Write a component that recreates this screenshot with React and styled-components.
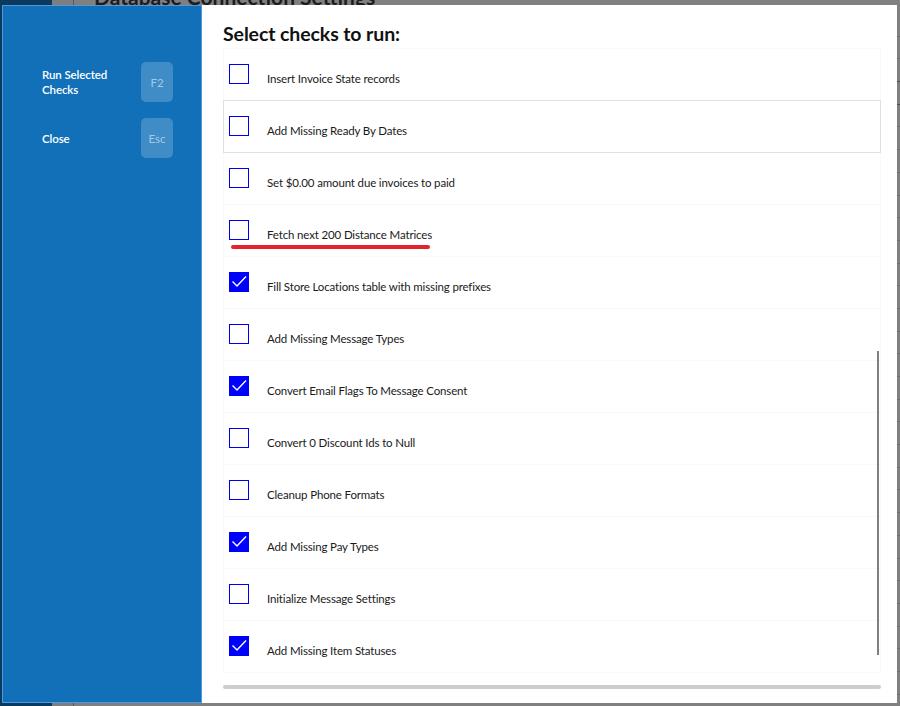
import React from "react";
import styled, { createGlobalStyle } from "styled-components";

const GlobalStyle = createGlobalStyle`
    html, body {
        margin: 0;
        padding: 0;
        background: #808080;
        overflow: hidden;
    }
    * {
        box-sizing: border-box;
    }
`;

const Page = styled.div`
    position: relative;
    width: 900px;
    height: 706px;
    overflow: hidden;
    display: flex;
    font-family: Lato, "Open Sans", sans-serif;
`;

const BgNav = styled.div`
    width: 52px;
    background: #0b3a5f;
`;

const BgGutter = styled.div`
    width: 22px;
    border-right: 1px solid #5a5a5a;
    background: #7e7e7e;
`;

const BgMain = styled.div`
    flex: 1;
    background: #808080;
    padding-left: 20px;
`;

// heading of the page under the dialog, only its lower edge peeks out
const BgHeading = styled.h1`
    margin: -15px 0 0;
    font-size: 21px;
    font-weight: 700;
    line-height: 24px;
    color: #1c1c1c;
`;

const BgLines = styled.div`
    margin-top: 5px;
    display: flex;
    flex-direction: column;
`;

const BgLine = styled.div`
    height: 22.7px;
    border-bottom: 1px solid ${({ $dark }) => ($dark ? "#4e4e4e" : "#6c6c6c")};
`;

const Modal = styled.div`
    position: absolute;
    top: 5px;
    left: 2px;
    width: 895px;
    height: 698px;
    display: flex;
    background: #fff;
`;

const Sidebar = styled.aside`
    width: 200px;
    background: #1170b8;
    border: 1px solid #4f97e0;
    padding: 56px 0 0 39px;
    display: flex;
    flex-direction: column;
    gap: 16px;
`;

const Action = styled.div`
    display: flex;
    align-items: center;
`;

const ActionLabel = styled.div`
    width: 99px;
    color: #fff;
    font-size: 11.5px;
    font-weight: 600;
    line-height: 15px;
    letter-spacing: -0.1px;
`;

const KeyCap = styled.div`
    width: 32px;
    height: 40px;
    border-radius: 5px;
    background: rgba(255, 255, 255, 0.2);
    color: rgba(255, 255, 255, 0.55);
    font-size: 11.5px;
    display: flex;
    align-items: center;
    justify-content: center;
`;

const Content = styled.section`
    position: relative;
    flex: 1;
    padding: 17px 16px 0 21px;
    display: flex;
    flex-direction: column;
`;

const Title = styled.h2`
    margin: 0 0 2px;
    font-size: 19.5px;
    font-weight: 700;
    line-height: 24px;
    letter-spacing: -0.1px;
    color: #111;
`;

const List = styled.div`
    display: flex;
    flex-direction: column;
`;

const Row = styled.div`
    position: relative;
    height: 53px;
    margin-top: -1px;
    border: 1px solid ${({ $hover }) => ($hover ? "#e0e0e0" : "#f9f9f9")};
    padding-left: 5px;
    display: flex;
    align-items: flex-start;
    z-index: ${({ $hover }) => ($hover ? 1 : 0)};

    &:first-child {
        margin-top: 0;
    }
`;

const Box = styled.div`
    width: 20px;
    height: 20px;
    margin-top: 15px;
    border: ${({ $checked }) => ($checked ? "none" : "1.5px solid #0000f0")};
    background: ${({ $checked }) => ($checked ? "#0000ff" : "#fff")};
    display: flex;
    align-items: center;
    justify-content: center;
`;

const Label = styled.span`
    margin: 22px 0 0 18px;
    font-size: 11.5px;
    line-height: 16px;
    letter-spacing: -0.15px;
    color: #1a1a1a;
`;

const Underline = styled.div`
    position: absolute;
    left: 7px;
    top: 40px;
    width: 199px;
    height: 4px;
    border-radius: 2px;
    background: #e5222a;
`;

const VScroll = styled.div`
    position: absolute;
    left: 675px;
    top: 346px;
    width: 2px;
    height: 304px;
    background: #7f7f7f;
`;

const HScroll = styled.div`
    margin-top: 12px;
    height: 4px;
    border-radius: 2px;
    background: #cdcdcd;
`;

const checks = [
    { label: "Insert Invoice State records" },
    { label: "Add Missing Ready By Dates", hover: true },
    { label: "Set $0.00 amount due invoices to paid" },
    { label: "Fetch next 200 Distance Matrices", marked: true },
    { label: "Fill Store Locations table with missing prefixes", checked: true },
    { label: "Add Missing Message Types" },
    { label: "Convert Email Flags To Message Consent", checked: true },
    { label: "Convert 0 Discount Ids to Null" },
    { label: "Cleanup Phone Formats" },
    { label: "Add Missing Pay Types", checked: true },
    { label: "Initialize Message Settings" },
    { label: "Add Missing Item Statuses", checked: true }
];

const Check = () => (
    <svg width="20" height="20" viewBox="0 0 20 20">
        <polyline
            points="3.5,9.5 8,14 17,4.5"
            fill="none"
            stroke="#fff"
            strokeWidth="1.4"
        />
    </svg>
);

const App = () => {
    const darkLines = [2, 3];

    return (
        <>
            <GlobalStyle />
            <Page>
                <BgNav />
                <BgGutter />
                <BgMain>
                    <BgHeading>Database Connection Settings</BgHeading>
                    <BgLines>
                        {Array.from({ length: 30 }, (_, i) => (
                            <BgLine key={i} $dark={darkLines.includes(i)} />
                        ))}
                    </BgLines>
                </BgMain>

                <Modal>
                    <Sidebar>
                        <Action>
                            <ActionLabel>Run Selected Checks</ActionLabel>
                            <KeyCap>F2</KeyCap>
                        </Action>
                        <Action>
                            <ActionLabel>Close</ActionLabel>
                            <KeyCap>Esc</KeyCap>
                        </Action>
                    </Sidebar>

                    <Content>
                        <Title>Select checks to run:</Title>
                        <List>
                            {checks.map((c) => (
                                <Row key={c.label} $hover={c.hover}>
                                    <Box $checked={c.checked}>
                                        {c.checked && <Check />}
                                    </Box>
                                    <Label>{c.label}</Label>
                                    {c.marked && <Underline />}
                                </Row>
                            ))}
                        </List>
                        <HScroll />
                        <VScroll />
                    </Content>
                </Modal>
            </Page>
        </>
    );
};

export default App;
